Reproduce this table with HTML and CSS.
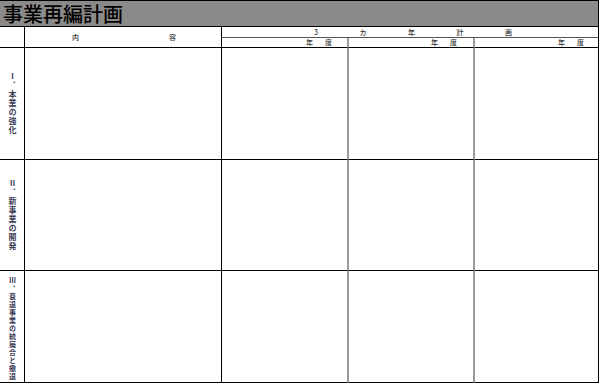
FILE: index.html
```html
<!DOCTYPE html>
<html lang="ja">
<head>
<meta charset="utf-8">
<title>事業再編計画</title>
<link rel="stylesheet" href="styles.css">
</head>
<body>
<div class="sheet">
  <div class="title">事業再編計画</div>
  <div class="grid">
    <div class="cell corner"></div>
    <div class="cell head-content"><span>内</span><span>容</span></div>
    <div class="cell plan"><span>3</span><span>カ</span><span>年</span><span>計</span><span>画</span></div>
    <div class="cell year y1"><span>年</span><span>度</span></div>
    <div class="cell year y2"><span>年</span><span>度</span></div>
    <div class="cell year y3 last"><span>年</span><span>度</span></div>

    <div class="cell label"><span class="vt">Ⅰ．本業の強化</span></div>
    <div class="cell body"></div>
    <div class="cell body sep"></div>
    <div class="cell body sep"></div>
    <div class="cell body last"></div>

    <div class="cell label"><span class="vt">Ⅱ．新事業の開発</span></div>
    <div class="cell body"></div>
    <div class="cell body sep"></div>
    <div class="cell body sep"></div>
    <div class="cell body last"></div>

    <div class="cell label"><span class="vt small">Ⅲ．衰退事業の統廃合と撤退</span></div>
    <div class="cell body"></div>
    <div class="cell body sep"></div>
    <div class="cell body sep"></div>
    <div class="cell body last"></div>
  </div>
</div>
</body>
</html>
```

FILE: styles.css
```css
html, body {
  margin: 0;
  padding: 0;
  background: #ffffff;
}

body {
  font-family: "Noto Sans CJK JP", "Noto Sans", sans-serif;
  color: #000;
}

.sheet {
  width: 599px;
}

.title {
  box-sizing: border-box;
  height: 27px;
  background: #8a8a8a;
  border-top: 1px solid #000;
  border-right: 1px solid #000;
  border-bottom: 1px solid #000;
  font-size: 20px;
  font-weight: 500;
  line-height: 25px;
  padding-left: 3px;
  color: #000;
}

.grid {
  display: grid;
  grid-template-columns: 25px 197px 127px 126px 124px;
  grid-template-rows: 11px 10px 112px 111px 112px;
}

.cell {
  box-sizing: border-box;
  border-right: 1px solid #000;
  border-bottom: 1px solid #000;
  font-size: 7px;
  font-weight: 500;
  color: #333;
}

.corner {
  grid-row: 1 / span 2;
}

.head-content {
  grid-row: 1 / span 2;
  display: flex;
  justify-content: space-between;
  align-items: center;
  padding: 0 45px 0 47px;
  line-height: 1;
}

.plan {
  grid-column: 3 / span 3;
  display: flex;
  justify-content: space-between;
  align-items: center;
  padding: 0 86px 0 92px;
  border-bottom-color: #555;
  line-height: 1;
}

.year {
  display: flex;
  justify-content: flex-end;
  align-items: center;
  gap: 12px;
  line-height: 1;
}

.y1 { padding-right: 15px; border-right: 2px solid #9a9a9a; }
.y2 { padding-right: 16px; border-right: 2px solid #9a9a9a; }
.y3 { padding-right: 14px; }

.sep {
  border-right: 2px solid #9a9a9a;
}

.label {
  display: flex;
  justify-content: center;
  align-items: center;
}

.vt {
  writing-mode: vertical-rl;
  text-orientation: upright;
  font-size: 8px;
  font-weight: 700;
  line-height: 1;
  letter-spacing: 1px;
  color: #3a3a55;
}

.vt.small {
  font-size: 7px;
  letter-spacing: 1px;
  padding-top: 4px;
}
```
